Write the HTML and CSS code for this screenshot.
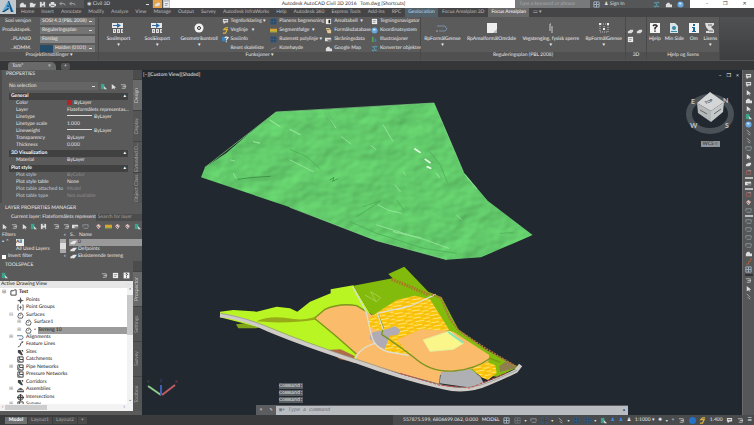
FILE: index.html
```html
<!DOCTYPE html>
<html lang="en">
<head>
<meta charset="utf-8">
<title>Autodesk AutoCAD Civil 3D 2016 - Tom.dwg</title>
<link rel="stylesheet" href="styles.css">
</head>
<body>
<svg class="defs" aria-hidden="true">
  <symbol id="sos" viewBox="0 0 12 12"><path fill="#e8e8e8" d="M0 1h11v5H0z"/><path fill="#2d6ea8" d="M1 3h4V1l4 2.500-4 2.500V4H1z"/><path fill="#ddd" d="M1 7h3v4H1zM5 7h3v4H5zM9 7h2v4H9z"/><path stroke="#444" d="M2 9h1M6 9h1M10 9h1"/></symbol>
  <symbol id="ring" viewBox="0 0 12 12"><circle cx="6" cy="6" r="4.500" fill="#f2f2f2"/><circle cx="6" cy="6" r="1.500" fill="#eee" stroke="#333"/></symbol>
  <symbol id="sheet" viewBox="0 0 8 8"><path fill="#eee" d="M1 1h6v6H1z"/><path stroke="#8a9299" d="M2 3h4M2 5h3"/></symbol>
  <symbol id="flag" viewBox="0 0 8 8"><path fill="#ddd" d="M1 1h6v4H4L2 7V5H1z"/><path stroke="#555" d="M2 3h4"/></symbol>
  <symbol id="curve" viewBox="0 0 8 8"><path fill="none" stroke="#d9b23c" stroke-width="1.300" d="M7 1H4L2 3h4L4 7H1"/></symbol>
  <symbol id="quest" viewBox="0 0 8 8"><path fill="#3a83bd" d="M0 1h4v5H0z"/><path fill="none" stroke="#e7eef4" stroke-width="1.300" d="M3 2l2-1 2 1-2 2v1M5 6v1"/></symbol>
  <symbol id="bluebox" viewBox="0 0 8 8"><path fill="#294763" stroke="#36597a" d="M1 1h6v6H1z"/><path stroke="#44698a" stroke-width=".5" d="M1 4h6M4 1v6"/></symbol>
  <symbol id="gold" viewBox="0 0 8 8"><path fill="#d9a531" d="M0 2h8v4H0z"/><path fill="#7fb04b" d="M0 5h8v1H0z"/></symbol>
  <symbol id="contrast" viewBox="0 0 8 8"><path fill="#eee" d="M1 1h6v6H1z"/><path fill="#222" d="M4 2h2v4H4z"/></symbol>
  <symbol id="hand" viewBox="0 0 8 8"><path fill="#e5c98e" d="M1 1h4l2 3v3H3z"/><path stroke="#666" d="M2 3h3"/></symbol>
  <symbol id="slope" viewBox="0 0 8 8"><path fill="#ddd" d="M0 2h7v4H0z"/><path fill="#777" d="M2 4h5v2H4z"/></symbol>
  <symbol id="cloud" viewBox="0 0 8 8"><path fill="#ddd" d="M1 6V4l2-2h2l1 2h2v3H1z"/></symbol>
  <symbol id="globe" viewBox="0 0 8 8"><circle cx="4" cy="4" r="3.500" fill="#6aa7dc"/><path fill="#d9ecfa" d="M2 2h3v2H3z"/></symbol>
  <symbol id="chart" viewBox="0 0 8 8"><path fill="#58a04c" d="M1 1h2v6H1z"/><path fill="#3f7cb6" d="M4 3h2v4H4z"/></symbol>
  <symbol id="swap" viewBox="0 0 8 8"><path fill="none" stroke="#5aa2b7" d="M1 2h6L5 1M7 6H1l2 1M3 2l2 4"/></symbol>
  <symbol id="dash" viewBox="0 0 8 8"><path stroke="#a08989" fill="none" d="M1 5l3-1 3-1"/></symbol>
  <symbol id="hook" viewBox="0 0 12 12"><path fill="none" stroke="#7891a8" d="M1 4h8l2 3-2 2H3"/><path fill="none" stroke="#aaa" d="M0 9h2"/></symbol>
  <symbol id="area" viewBox="0 0 12 12"><path fill="#eee" d="M1 1h10v10H1z"/><path fill="#bbb" d="M7 11l4-4v4z"/></symbol>
  <symbol id="gate" viewBox="0 0 12 12"><path fill="none" stroke="#ccc" d="M5 2v7M7 4v7M5 2l1 0"/></symbol>
  <symbol id="nodes" viewBox="0 0 12 12"><path stroke="#bbb" stroke-dasharray="1 1" fill="none" d="M1 2h10M2 2v8h8V2M6 4v4"/><path fill="#eee" d="M1 1h2v2H1zM9 1h2v2H9zM5 6h2v2H5z"/></symbol>
  <symbol id="help" viewBox="0 0 12 12"><path fill="#f4f4f4" d="M1 1h10v10H1z"/><path fill="none" stroke="#222" stroke-width="1.500" d="M4 4l1-1h2l1 1-2 2v1.500M6 8.500v1.300"/></symbol>
  <symbol id="page" viewBox="0 0 12 12"><path fill="#d7e4ea" d="M2 1h5l3 3v7H2z"/><circle cx="6" cy="6" r="2" fill="#3c8ba6"/><path fill="#3c8ba6" d="M3 9h6v1H3z"/></symbol>
  <symbol id="info" viewBox="0 0 12 12"><path fill="#f4f4f4" d="M1 1h10v10H1z"/><path fill="#176a9e" d="M5 2h2v2H5zM4 5h3v4h1v1H4V9h1V6H4z"/></symbol>
  <symbol id="scroll" viewBox="0 0 12 12"><path fill="#ddd" d="M1 1h9v2L7 5l3 3v3H2V9h3L2 5z"/><path stroke="#666" d="M4 3h4M5 9h4"/></symbol>
  <symbol id="cube" viewBox="0 0 8 8"><path fill="#ddd" d="M1 4l3-2h3v2L5 6H1z"/></symbol>
  <symbol id="save" viewBox="0 0 8 8"><path fill="#ddd" d="M1 1h6v6H1z"/><path fill="#666" d="M3 1h2v2H3zM3 5h3v2H3z"/></symbol>
  <symbol id="print" viewBox="0 0 8 8"><path fill="#ddd" d="M2 1h4v2h2v3H6v1H2V6H0V3h2z"/><path stroke="#666" d="M2 5h4"/></symbol>
  <symbol id="undo" viewBox="0 0 8 8"><path fill="none" stroke="#aaa" d="M3 1L1 3l2 2M1 3h5l1 2"/></symbol>
  <symbol id="folder" viewBox="0 0 8 8"><path fill="#ddd" d="M1 2h3l1 1h3L6 7H1z"/></symbol>
  <symbol id="arrow" viewBox="0 0 8 8"><path fill="#ddd" d="M2 1l5 4-2 .500L6 8 4 6 2 7z"/></symbol>
  <symbol id="layer" viewBox="0 0 8 8"><path fill="#e5e5e5" d="M1 4l3-2h4L5 6H0z"/></symbol>
  <symbol id="stack" viewBox="0 0 8 8"><path fill="none" stroke="#bbb" d="M1 2h5v4H2M3 4h4"/></symbol>
  <symbol id="redstack" viewBox="0 0 8 8"><path fill="#ccc" d="M1 3l3-2 3 2-3 4z"/><path fill="none" stroke="#b0504a" d="M1 2l4 4M5 2l2 2"/></symbol>
  <symbol id="redbox" viewBox="0 0 8 8"><path fill="none" stroke="#a05c5c" d="M1.500 2v4h5V2z"/><path stroke="#999" d="M3 2h4"/></symbol>
  <symbol id="pencil" viewBox="0 0 8 8"><path fill="none" stroke="#aaa" d="M2 1l4 4M3 5l3 2"/></symbol>
  <symbol id="teal" viewBox="0 0 8 8"><path fill="#39a38b" d="M1 1h4v6H1z"/><path fill="#ddd" d="M4 3l4 4H5z"/></symbol>
  <symbol id="earth" viewBox="0 0 8 8"><path fill="none" stroke="#a7643e" d="M1 7h3V4h2V1h2"/></symbol>
  <symbol id="grid" viewBox="0 0 8 8"><path fill="none" stroke="#a6b6c6" d="M1 1h6v6H1zM4 1v6M1 4h6"/></symbol>
  <symbol id="wire" viewBox="0 0 8 8"><path fill="none" stroke="#8f989c" d="M1 5V2h6v3M2 6h5"/></symbol>
  <symbol id="tdoc" viewBox="0 0 8 8"><path fill="none" stroke="#333" d="M1 2h3l1-1h2v6H1z"/></symbol>
  <symbol id="tpoint" viewBox="0 0 8 8"><path fill="#555" d="M4 0l1 3 3 1-3 1-1 3-1-3-3-1 3-1z"/></symbol>
  <symbol id="tgroup" viewBox="0 0 8 8"><path fill="none" stroke="#666" d="M2 1H1v6h1M6 1h1v6H6M4 2v4M2.500 4h3"/></symbol>
  <symbol id="tsurf" viewBox="0 0 8 8"><path fill="none" stroke="#555" d="M1 5l1-3 3-1 2 3-1 3H2zM3 4l2-1"/></symbol>
  <symbol id="talign" viewBox="0 0 8 8"><path fill="none" stroke="#4a718f" d="M0 2h6l1 2-1 2H2"/></symbol>
  <symbol id="tfeat" viewBox="0 0 8 8"><path fill="none" stroke="#444" d="M1 7l3-2V3l3-2M5 1h2"/></symbol>
  <symbol id="tpipe" viewBox="0 0 8 8"><path fill="none" stroke="#333" d="M1 1h6v6H1zM3 1v3h4M1 4l3 3"/></symbol>
  <symbol id="tcorr" viewBox="0 0 8 8"><path fill="#444" d="M1 1h3l3 6H5L1 4zM5 1h2v3z"/></symbol>
  <symbol id="tasm" viewBox="0 0 8 8"><path fill="#555" d="M0 5l2-2 2-1 2 1 2 2v2H0z"/><path stroke="#ddd" d="M1 5h6"/></symbol>
  <symbol id="tint" viewBox="0 0 8 8"><circle cx="4" cy="4" r="3" fill="none" stroke="#444"/><path stroke="#444" stroke-width="1.500" d="M4 0v8M0 4h8"/></symbol>
</svg>

<div class="app">
  <header class="titlebar">
    <div class="quick">
      <button class="ib" aria-label="New"><svg><use href="#cloud"/></svg></button>
      <button class="ib" aria-label="Open"><svg><use href="#folder"/></svg></button>
      <button class="ib" aria-label="Save"><svg><use href="#save"/></svg></button>
      <button class="ib" aria-label="Plot"><svg><use href="#print"/></svg></button>
      <button class="ib" aria-label="Undo"><svg><use href="#undo"/></svg></button>
      <button class="ib" aria-label="Redo"><svg><use href="#undo"/></svg></button>
      <select class="workspace" aria-label="Workspace"><option>◉ Civil 3D</option></select>
      <button class="ib hot" aria-label="Share"><svg><use href="#cube"/></svg></button>
      <button class="ib pale" aria-label="More"><svg><use href="#sheet"/></svg></button>
    </div>
    <h1>Autodesk AutoCAD Civil 3D 2016 &nbsp; Tom.dwg [Shortcuts]</h1>
    <input class="search" aria-label="Search" placeholder="Type a keyword or phrase">
    <div class="account">
      <button class="ib" aria-label="Find"><svg><use href="#grid"/></svg></button>
      <button>♟ Sign In</button><span class="grow"></span>
      <button class="ib" aria-label="Exchange"><svg><use href="#swap"/></svg></button>
      <button class="ib" aria-label="Connect"><svg><use href="#cloud"/></svg></button>
      <button class="ib" aria-label="Help"><svg><use href="#globe"/></svg></button>
    </div>
    <div class="winbtns"><button aria-label="Minimize">–</button><button aria-label="Restore">❐</button><button aria-label="Close">✕</button></div>
    <button class="appbtn" aria-label="Application menu"><svg viewBox="0 0 16 14"><path fill="#58a8d8" d="M8 1L2 12h3l1-3h4l1 3h3L9 1z"/><path fill="#164f7e" d="M8 4l1 3H7zM8 1l3 11h2L9 1z"/><path fill="#123f66" d="M2 12l6-4 1 1-5 3z"/></svg></button>
  </header>

  <nav class="menu">
    <a href="#">Home</a><a href="#">Insert</a><a href="#">Annotate</a><a href="#">Modify</a><a href="#">Analyze</a><a href="#">View</a><a href="#">Manage</a><a href="#">Output</a><a href="#">Survey</a><a href="#">Autodesk InfraWorks</a><a href="#">Help</a><a href="#">Autodesk 360</a><a href="#">Express Tools</a><a href="#">Add-ins</a><a href="#">RPC</a><a href="#" class="geo">Geolocation</a><a href="#">Focus Arealplan 3D</a><a href="#" class="on">Focus Arealplan</a><a href="#">▭ ▾</a>
  </nav>

  <div class="ribbon">
    <section class="panel p1">
      <div class="body form">
        <label for="s1">Sosi versjon</label><select id="s1"><option>SOSI 4.3 (PBL 2008)</option></select>
        <label for="s2">Produktspek.</label><select id="s2"><option>Reguleringsplan</option></select>
        <label for="s3">..PLANID</label><input id="s3" value="Forslag">
        <label for="s4">..KOMM.</label><select id="s4" class="komm"><option>Halden (0101)</option></select>
      </div>
      <h2>Prosjektinnstillinger ▾</h2>
    </section>
    <section class="panel p2">
      <div class="body">
        <button class="big"><svg><use href="#sos"/></svg>SosiImport<i>▾</i></button>
        <button class="big"><svg><use href="#sos"/></svg>SosiEksport<i>▾</i></button>
        <button class="big"><svg><use href="#ring"/></svg>Geometrikontroll<i>▾</i></button>
        <div class="cmds">
          <button><svg><use href="#flag"/></svg>Tegnforklaring ▾</button>
          <button><svg><use href="#curve"/></svg>Veglinje &nbsp; ▾</button>
          <button><svg><use href="#quest"/></svg>Sosiinfo</button>
          <button><svg></svg>Reset skaleliste</button>
        </div>
        <div class="cmds c2">
          <button><svg><use href="#bluebox"/></svg>Planens begrensning</button>
          <button><svg><use href="#gold"/></svg>Segmentfølge &nbsp;▾</button>
          <button><svg><use href="#bluebox"/></svg>Rutenett polylinje ▾</button>
          <button><svg><use href="#dash"/></svg>Kotehøyde</button>
        </div>
        <div class="cmds c3">
          <button><svg><use href="#contrast"/></svg>Arealtabell &nbsp;▾</button>
          <button><svg><use href="#hand"/></svg>Formålsdatabase</button>
          <button><svg><use href="#slope"/></svg>Skråningsdata</button>
          <button><svg><use href="#cloud"/></svg>Google Map</button>
        </div>
        <div class="cmds c4">
          <button><svg><use href="#sheet"/></svg>Tegningsnavigator</button>
          <button><svg><use href="#globe"/></svg>Koordinatsystem</button>
          <button><svg><use href="#chart"/></svg>Illustrasjoner</button>
          <button><svg><use href="#swap"/></svg>Konverter objekter</button>
        </div>
      </div>
      <h2>Funksjoner ▾</h2>
    </section>
    <section class="panel p3">
      <div class="body">
        <button class="big"><svg><use href="#hook"/></svg>RpFormålGrense<i>▾</i></button>
        <button class="big"><svg><use href="#area"/></svg>RpArealformålOmråde</button>
        <button class="big"><svg><use href="#gate"/></svg>Vegstenging, fysisk sperre<i>▾</i></button>
        <button class="big"><svg><use href="#nodes"/></svg>RpFormålGrense<i>▾</i></button>
      </div>
      <h2>Reguleringsplan (PBL 2008)</h2>
    </section>
    <section class="panel p4">
      <div class="body mini">
        <button class="ib" aria-label="Solid"><svg><use href="#cube"/></svg></button><button class="ib" aria-label="Box"><svg><use href="#cube"/></svg></button><button class="ib" aria-label="Cylinder"><svg><use href="#sheet"/></svg></button>
      </div>
      <h2>3D</h2>
    </section>
    <section class="panel p5">
      <div class="body">
        <button class="big"><svg><use href="#help"/></svg>Hjelp</button>
        <button class="big"><svg><use href="#page"/></svg>Min Side</button>
        <button class="big"><svg><use href="#info"/></svg>Om</button>
        <button class="big"><svg><use href="#scroll"/></svg>Lisens<i>▾</i></button>
      </div>
      <h2>Hjelp og lisens</h2>
    </section>
  </div>

  <div class="files"><button class="file">Tom*<span>×</span></button><button class="plus" aria-label="New drawing">+</button></div>

  <main class="work">
    <aside class="side">
      <section class="dock">
        <div class="content props">
          <h3>PROPERTIES</h3>
          <div class="pick">
            <select aria-label="Selection"><option>No selection</option></select>
            <button class="ib" aria-label="Toggle pick"><svg><use href="#teal"/></svg></button>
            <button class="ib" aria-label="Select objects"><svg><use href="#arrow"/></svg></button>
            <button class="ib" aria-label="Quick select"><svg><use href="#stack"/></svg></button>
          </div>
          <table>
            <colgroup><col class="name"><col></colgroup>
            <tbody>
            <tr class="head"><th colspan="2">General<span>▴</span></th></tr>
            <tr><td>Color</td><td><b class="red"></b>ByLayer</td></tr>
            <tr><td>Layer</td><td>Flateformålets  representas...</td></tr>
            <tr><td>Linetype</td><td><b class="line"></b>ByLayer</td></tr>
            <tr><td>Linetype scale</td><td>1.000</td></tr>
            <tr><td>Lineweight</td><td><b class="line"></b>ByLayer</td></tr>
            <tr><td>Transparency</td><td>ByLayer</td></tr>
            <tr><td>Thickness</td><td>0.000</td></tr>
            </tbody><tbody>
            <tr class="head next"><th colspan="2">3D Visualization<span>▴</span></th></tr>
            <tr><td>Material</td><td>ByLayer</td></tr>
            </tbody><tbody>
            <tr class="head next"><th colspan="2">Plot style<span>▴</span></th></tr>
            <tr class="off"><td>Plot style</td><td>ByColor</td></tr>
            <tr><td>Plot style table</td><td>None</td></tr>
            <tr class="off"><td>Plot table attached to</td><td>Model</td></tr>
            <tr class="off"><td>Plot table type</td><td>Not available</td></tr>
            </tbody>
          </table>
        </div>
        <div class="tabs"><button class="on">Design</button><button>Display</button><button>Extended D...</button><button>Object Class</button></div>
      </section>

      <section class="layers">
        <h3>LAYER PROPERTIES MANAGER</h3>
        <div class="current"><span>Current layer: Flateformålets  represent</span><input aria-label="Search for layer" placeholder="Search for layer"></div>
        <div class="ltools">
          <svg><use href="#arrow"/></svg><svg><use href="#stack"/></svg><svg><use href="#arrow"/></svg><svg><use href="#teal"/></svg><svg><use href="#save"/></svg><i></i><svg><use href="#stack"/></svg><svg><use href="#stack"/></svg><svg><use href="#slope"/></svg><svg><use href="#wire"/></svg><i></i><svg><use href="#redstack"/></svg><svg><use href="#gold"/></svg><svg><use href="#redstack"/></svg><svg><use href="#redstack"/></svg><svg><use href="#teal"/></svg>
        </div>
        <div class="lbody">
          <div class="filters">
            <p>Filters<span>«</span></p>
            <div class="ftree"><span>▪ ⌃</span><b>All</b><em>All Used Layers</em><u></u></div>
            <label><input type="checkbox">Invert filter<span>«</span></label>
          </div>
          <ul class="names">
            <li>S.. &nbsp; Name</li>
            <li class="sel"><svg><use href="#layer"/></svg>0</li>
            <li><svg><use href="#layer"/></svg>Defpoints</li>
            <li><svg><use href="#layer"/></svg>Eksisterende terreng</li>
          </ul>
        </div>
      </section>

      <section class="dock space">
        <div class="content">
          <h3>TOOLSPACE</h3>
          <div class="stools"><button class="ib" aria-label="Item view"><svg><use href="#teal"/></svg></button><span class="grow"></span><button class="ib" aria-label="Panorama"><svg><use href="#stack"/></svg></button><button class="ib" aria-label="Preview"><svg><use href="#sheet"/></svg></button><button class="ib" aria-label="Help"><svg><use href="#help"/></svg></button></div>
          <select class="view" aria-label="View"><option>Active Drawing View</option></select>
          <div class="treebox">
            <ul class="tree">
              <li class="l0 strong"><i>⊟</i><svg><use href="#tdoc"/></svg>Test</li>
              <li><i></i><svg><use href="#tpoint"/></svg>Points</li>
              <li><i></i><svg><use href="#tgroup"/></svg>Point Groups</li>
              <li><i>⊟</i><svg><use href="#tsurf"/></svg>Surfaces</li>
              <li class="l2"><i>⊞</i><svg><use href="#tsurf"/></svg>Surface1</li>
              <li class="l2 chosen"><i>⊞</i><svg><use href="#tsurf"/></svg><small>▫</small><mark>Terreng 10</mark></li>
              <li><i>⊞</i><svg><use href="#talign"/></svg>Alignments</li>
              <li><i></i><svg><use href="#tfeat"/></svg>Feature Lines</li>
              <li><i></i><svg><use href="#tcorr"/></svg>Sites</li>
              <li><i></i><svg><use href="#tpipe"/></svg>Catchments</li>
              <li><i>⊞</i><svg><use href="#tpipe"/></svg>Pipe Networks</li>
              <li><i></i><svg><use href="#tpipe"/></svg>Pressure Networks</li>
              <li><i></i><svg><use href="#tcorr"/></svg>Corridors</li>
              <li><i>⊞</i><svg><use href="#tasm"/></svg>Assemblies</li>
              <li><i></i><svg><use href="#tint"/></svg>Intersections</li>
              <li class="cut"><i>⊞</i><svg><use href="#tpipe"/></svg>Survey</li>
            </ul>
            <div class="vbar"><span>⌃</span><b></b><span>⌄</span></div>
          </div>
          <div class="hbar"><span>‹</span><b></b><span>›</span></div>
        </div>
        <div class="tabs"><button class="on">Prospector</button><button>Settings</button><button>Survey</button><button>Toolbox</button></div>
      </section>
    </aside>

    <section class="canvas">
      <svg class="model" viewBox="142 70 600 345" role="img" aria-label="Terrain surface and zoning plan">
        <defs>
          <filter id="relief" x="0" y="0" width="100%" height="100%" color-interpolation-filters="sRGB">
            <feTurbulence type="fractalNoise" baseFrequency=".012 .016" numOctaves="3" seed="8" result="n"/>
            <feDiffuseLighting in="n" surfaceScale="4" diffuseConstant="1.150" lighting-color="#63cb6b"><feDistantLight azimuth="225" elevation="60"/></feDiffuseLighting>
            <feComposite in2="SourceGraphic" operator="in"/>
          </filter>
          <pattern id="hatch" width="52" height="22" patternUnits="userSpaceOnUse" patternTransform="rotate(-9)"><path fill="#fbc60a" d="M0 0h52v22H0z"/><path stroke="#fff3b5" stroke-width="2" d="M2 4h24M32 9h18M8 15h26M40 20h12"/><path stroke="#f0a818" stroke-width="2" d="M28 3h16M3 10h20M38 15h12"/></pattern>
        </defs>
        <g transform="translate(190 90) scale(.3333)">
          <path filter="url(#relief)" fill="#60c868" d="M33 262L45 232L110 188L175 132L258 66L420 58L732 39L780 150L820 245L893 332L1028 435L873 502L770 509L560 452L300 352z"/>
          <g fill="none" stroke-linecap="round">
            <path stroke="#a8efaa" stroke-width="2" d="M400 64l38 50M455 140l28 22M580 105l28 48M560 405l60 18l90 28l66 24M545 168l12 10M825 254l35 42M565 345l28 15l42 10M122 210l12 3M300 210l70 35M800 375l14 14M130 250l8 15M615 285l16 20M640 245l6 10"/>
            <path stroke="#4aa653" stroke-width="2" d="M400 63l30 45M720 185l32 42l20 50M520 350l52-18M480 395l80 35l140 45l100 15M930 430l40-2M500 380l70-45M300 178l50 22l40 36M620 330l22 30"/>
            <path stroke="#2f8038" stroke-width="2" d="M420 270l12-8l-4 12l16-8M145 268l30-4l20-2l46-3"/>
            <path stroke="#eaffea" stroke-width="5" d="M675 177l15 10M706 208l14 10M712 230l10 5"/>
            <path stroke="#8ce391" stroke-width="4" d="M610 425l85 20M740 250l8 12M240 90l30 20M190 155l18 4M300 118l30 16"/>
            <path stroke="#84dd89" stroke-width="2" d="M45 232L258 66L732 39L820 245M300 352l260 100l210 57"/>
          </g>
        </g>
        <g transform="translate(210 260) scale(.3333)">
          <path fill="#80a519" d="M78 193l70-8l30 10l-40 10H85z"/>
          <path fill="#b9f522" d="M30 155L70 150L140 155L200 140L240 145L262 155L300 125L362 100V88L430 76L480 160L440 305L160 205L30 172z"/>
          <path fill="#83bb0c" d="M430 77L548 55L535 42L583 20L655 95L695 112L745 208L830 270L925 322L860 350L730 330L480 160z"/>
          <path fill="#97ab18" d="M140 184q40-20 110-7q50 6 90-18l-25 20q-60 10-130 8z"/>
          <path fill="#fabb6a" d="M315 173L350 145Q390 130 440 137L475 160L500 170L560 195L730 215L838 285L835 305Q800 330 740 335L690 345L688 372L440 305L438 280z"/>
          <path fill="url(#hatch)" d="M500 158L560 120L615 107L660 118L718 210L645 222L595 265L605 280L560 282L525 270L515 215L475 200L475 178z"/>
          <path fill="#fabb6a" d="M560 240l72-32l84 4l-76 22l-6 28l-40 14z"/>
          <path fill="#b0abb4" d="M484 218l50-12l20-8l18 12l-8 14l-24 3l-16 40l-24-12l-22-20z"/>
          <path fill="#faf68a" stroke="#e3f1a0" stroke-width="3" d="M640 240l60-20l20-6l40 36l-30 18l-70 6z"/>
          <path fill="none" stroke="#83e6b8" stroke-width="6" d="M715 216l44 32"/>
          <path fill="#aeb0b4" d="M693 336l90-8l28 22l12 22l-50 10l-84-12z"/>
          <path fill="url(#hatch)" d="M787 326l45-20l24 10l4 24l-26 20l-20-8z"/>
          <path fill="#8f7f4d" d="M868 318l22-16l30 22l-50 12z"/>
          <path fill="#b16c47" d="M350 270l42-2l42 20l-4 18l-40-8z"/>
          <g fill="none" stroke-linejoin="round">
            <path stroke="#7c951c" stroke-width="4" d="M315 173L345 148Q390 128 440 137L468 154M502 158l18 45l-5 20q60 40 98 70q50 45 120 40q60-4 108-38l30 12M315 176l60 50l64 56"/>
            <path stroke="#e0ded0" stroke-width="4" d="M428 80l40 74l16 70q8 40 52 52l60 10M434 302q10-36 60-52M520 210l-18-50l100-22l75-35"/>
            <path stroke="#cfccc8" stroke-width="12" d="M30 166q70 8 145 43q100 42 260 94q140 52 265 79q70 18 140-14q40-16 78-35l14-18"/>
            <path stroke="#8a8a86" stroke-width="2" d="M32 160q80 14 150 44q100 42 260 95q130 46 255 76q80 20 150-12l74-32"/>
            <path stroke="#a77a24" stroke-width="10" stroke-dasharray="5 3" d="M545 58l45 18l65 28"/>
            <path stroke="#ad7440" stroke-width="6" stroke-dasharray="6 3" d="M655 100l38 14l25 60l28 38l85 56l88 52"/>
            <path stroke="#c55048" stroke-width="3" stroke-dasharray="9 4" d="M570 340l120 36l90 8l50-20l60-25"/>
            <path stroke="#b5d669" stroke-width="2" d="M465 105l35 20l12-12l-30-18l16 30"/>
          </g>
        </g>
        <g fill="none" stroke-width="2"><path stroke="#8dcd8b" d="M148 386l13 9"/><path stroke="#405fb4" d="M161 395v-10"/><path stroke="#bd5c67" d="M162 395l13-10"/></g>
        <g class="axes"><text x="147" y="383" fill="#397145">Y</text><text x="160" y="382" fill="#41539a">Z</text><text x="175" y="383" fill="#a23f49">X</text></g>
      </svg>
      <a class="viewlabel" href="#">[−][Custom View][Shaded]</a>
      <div class="corner">
        <div class="winctl"><button aria-label="Minimize">–</button><button aria-label="Restore">❐</button><button aria-label="Close">×</button></div>
        <svg class="viewcube" viewBox="0 0 50 45"><ellipse cx="25" cy="23" rx="21" ry="17" fill="none" stroke="#4a5157" stroke-width="6"/><path fill="#d3d5d6" d="M25 1l14 10l-13 9L12 12z"/><path fill="#b5b8ba" d="M12 12l14 8v11L13 22z"/><path fill="#c5c8c9" d="M39 11l-13 9v11l12-10z"/><text x="20" y="12" transform="rotate(-25 24 11)" fill="#444">TOP</text><path stroke="#666" d="M15 19l7 4M29 23l7-5"/><g class="dir" fill="#bfc4c7"><text x="6" y="13">E</text><text x="38" y="12">N</text><text x="5" y="37">W</text><text x="40" y="37">S</text></g></svg>
        <button class="wcs">WCS ▿</button>
      </div>
      <div class="console">
        <output>Command:</output><output>Command:</output><output>Command:</output>
        <div class="cmdline"><span>×</span><span>✎</span><input aria-label="Command" placeholder="▣▾ Type a command"><button aria-label="History">▴</button></div>
      </div>
    </section>

    <div class="rail">
      <svg><use href="#flag"/></svg><svg><use href="#flag"/></svg><svg><use href="#arrow"/></svg><svg><use href="#cloud"/></svg><svg><use href="#arrow"/></svg><svg><use href="#teal"/></svg><svg><use href="#globe"/></svg><svg><use href="#pencil"/></svg><svg><use href="#pencil"/></svg><svg><use href="#wire"/></svg><svg><use href="#arrow"/></svg><svg><use href="#cube"/></svg><svg><use href="#redbox"/></svg><hr><svg><use href="#slope"/></svg><hr><svg><use href="#redbox"/></svg><svg><use href="#redstack"/></svg><svg><use href="#wire"/></svg><hr><svg><use href="#wire"/></svg><svg><use href="#wire"/></svg><svg><use href="#wire"/></svg><svg><use href="#wire"/></svg><svg><use href="#cloud"/></svg><svg><use href="#earth"/></svg><svg><use href="#grid"/></svg><hr class="dark"><svg><use href="#stack"/></svg><svg><use href="#arrow"/></svg><svg><use href="#pencil"/></svg>
    </div>
  </main>

  <footer class="status">
    <button class="lay on">Model</button><button class="lay">Layout1</button><button class="lay">Layout2</button><button class="lay add">+</button>
    <span class="grow"></span>
    <div class="tray">
      <span class="coords">557875.599, 6806699.062, 0.000</span><button>MODEL</button>
      <svg><use href="#grid"/></svg><svg class="dim"><use href="#grid"/></svg><i>▾</i><svg><use href="#wire"/></svg><svg class="blue"><use href="#tint"/></svg><i>▾</i><svg><use href="#pencil"/></svg><i>▾</i><svg><use href="#bluebox"/></svg><svg><use href="#bluebox"/></svg><i>▾</i><svg><use href="#teal"/></svg><span class="lit">♟</span><span class="lit">♟</span><span>♟</span><button>1:1000 ▾</button><span>✹</span><i>▾</i><span>+</span><svg><use href="#stack"/></svg><span class="dot"></span><svg><use href="#curve"/></svg><button>1.400</button><svg><use href="#flag"/></svg><svg><use href="#stack"/></svg><span>☰</span>
    </div>
  </footer>
</div>
</body>
</html>
```
FILE: styles.css
```css
* { box-sizing: border-box; }
html, body { height: 100%; }
body { margin: 0; font: 5px/7px Lato, "Noto Sans", sans-serif; color: #e8e8e8; background: #3b3c3e; overflow: hidden; text-rendering: geometricPrecision; }
button, input, select { font: inherit; color: inherit; text-rendering: inherit; margin: 0; padding: 0; border: 0; background: none; min-width: 0; border-radius: 0; }
button { white-space: nowrap; }
select { appearance: none; padding: 0 3px; background: #727272 linear-gradient(#ddd, #ddd) right 3px center / 3px 1px no-repeat; }
a { color: inherit; text-decoration: none; }
h1, h2, h3, p, ul { margin: 0; padding: 0; font-size: 5px; font-weight: 400; list-style: none; }
svg { display: block; flex: none; width: 7px; height: 7px; overflow: hidden; }
i { font-style: normal; }
.defs { position: absolute; width: 0; height: 0; }
.grow { flex: 1; }
.ib { display: grid; place-items: center; width: 9px; height: 8px; flex: none; }

.app { height: 100%; display: flex; flex-direction: column; }

.titlebar { position: relative; display: flex; height: 8px; flex: none; background: #fff; color: #333; }
.titlebar h1 { flex: 1; text-align: center; line-height: 8px; white-space: nowrap; padding-left: 2px; }
.quick { display: flex; align-items: center; gap: 1px; width: 170px; padding-left: 18px; background: #555658; color: #ddd; }
.workspace { flex: 1; height: 8px; margin-left: 6px; background-color: #454648; }
.hot { background: #e6a247; }
.pale { background: #bfc3c7; width: 7px; }
.search { width: 75px; background: #77797b; padding: 0 4px; color: #bbb; }
.search::placeholder { color: #a9a9a9; }
.account { display: flex; align-items: center; gap: 3px; width: 100px; background: #555658; color: #ddd; padding: 0 5px 0 2px; }
.winbtns { display: flex; width: 64px; justify-content: space-around; padding-left: 8px; }
.appbtn { position: absolute; left: 0; top: 0; width: 16px; height: 14px; background: #c0c8ce; z-index: 2; }
.appbtn svg { width: 16px; height: 14px; }

.menu { display: flex; align-items: center; height: 9px; flex: none; gap: 1px; padding-left: 18px; background: #454547; color: #bcbcbc; white-space: nowrap; }
.menu a { padding: 0 3px; line-height: 9px; }
.menu .geo { background: #53616a; color: #b9dbe8; }
.menu .on { background: #69696a; color: #fff; }

.ribbon { display: flex; height: 43px; flex: none; background: linear-gradient(#505153, #3d3e40); }
.panel { display: flex; flex-direction: column; background: #5b5b5c; border-right: 1px solid #494949; }
.panel h2 { height: 8px; line-height: 7px; text-align: center; background: #505051; }
.body { display: flex; flex: 1; padding-top: 1px; }
.p1 { width: 99px; }
.p2 { width: 322px; }
.p3 { width: 205px; }
.p4 { width: 21px; }
.p5 { width: 73px; }
.form { display: grid; grid-template-columns: 31px 1fr; grid-auto-rows: 7px; gap: 2px 9px; padding: 1px 3px 0 0; align-content: start; }
.form label { text-align: right; white-space: nowrap; }
.form select, .form input { height: 7px; width: 100%; line-height: 7px; background-color: #747475; }
.form select { padding: 0 8px 0 2px; }
.form input { padding-left: 2px; background: #858586; }
.form .komm { border-left: 13px solid #244c69; }
.big { display: flex; flex-direction: column; align-items: center; justify-content: flex-start; padding-top: 4px; line-height: 7px; color: #f0f0f0; }
.big svg { width: 12px; height: 12px; margin-bottom: 2px; }
.big i { line-height: 4px; }
.p2 .big { width: 39px; }
.p2 .big:nth-child(3) { width: 45px; }
.p3 .big { flex: 1 1 auto; }
.p5 .big { flex: 1 1 auto; }
.cmds { display: flex; flex-direction: column; gap: 2px; width: 49px; white-space: nowrap; }
.cmds.c2 { width: 55px; }
.cmds.c3 { width: 46px; }
.cmds.c4 { width: 49px; }
.cmds button { display: flex; align-items: center; gap: 2px; height: 7px; line-height: 7px; }
.mini { flex-wrap: wrap; align-content: center; }

.files { display: flex; align-items: flex-end; gap: 5px; height: 10px; flex: none; padding-left: 8px; background: #353638; border-top: 1px solid #555; }
.file { display: flex; justify-content: space-between; width: 48px; height: 8px; line-height: 8px; padding: 0 5px 0 4px; background: #69696a; border-radius: 3px 5px 0 0; }
.plus { width: 9px; height: 7px; background: #555; border-radius: 2px; }

.work { display: flex; flex: 1; min-height: 0; }
.side { display: flex; flex-direction: column; width: 142px; flex: none; background: #5a5a5b; }
h3 { height: 8px; line-height: 8px; padding-left: 5px; }
.dock { display: flex; }
.content { flex: 1; min-width: 0; display: flex; flex-direction: column; }
.tabs { display: flex; flex-direction: column; width: 9px; flex: none; background: #4c4c4d; color: #a5a5a5; }
.tabs button { flex: 1; writing-mode: vertical-rl; transform: rotate(180deg); line-height: 9px; background: #555556; border-bottom: 1px solid #444; }
.tabs .on { background: #69696a; color: #ccc; }
.props { padding: 0 5px 3px 7px; border-left: 2px solid #4b4b4c; }
.props h3 { padding-left: 0; margin-left: -3px; }
.props + .tabs { padding-top: 9px; }
.pick { display: flex; align-items: center; gap: 1px; padding: 4px 0 3px; }
.pick select { flex: 1; height: 8px; background-color: #656566; padding: 0; }
table { border-collapse: collapse; table-layout: fixed; width: 100%; }
.name { width: 58px; }
td, th { height: 7px; line-height: 7px; padding: 0; text-align: left; white-space: nowrap; }
td:first-child { padding-left: 7px; }
.head th { background: #414142; font-weight: 700; color: #fff; padding: 0 2px; }
.head.next th { border-top: 1px solid #5a5a5b; }
.head span { float: right; font-weight: 400; }
.off td { color: #cfcfcf; }
.off td + td { color: #8e8e8e; }
.red { display: inline-block; width: 5px; height: 5px; margin-right: 2px; background: #b52424; vertical-align: -1px; }
.line { display: inline-block; width: 25px; height: 1px; margin-right: 2px; background: #ddd; vertical-align: 2px; }

.layers { padding-top: 1px; }
.current { display: flex; align-items: center; height: 10px; padding-left: 11px; white-space: nowrap; }
.current span { flex: 1; }
.current input { width: 50px; height: 7px; padding-left: 2px; background: #4c4c4d; }
.current input::placeholder { color: #a5a5a5; }
.ltools { display: flex; justify-content: space-between; height: 10px; padding: 1px 1px 0; }
.lbody { display: flex; height: 29px; overflow: hidden; }
.filters { width: 69px; padding: 0 3px 0 2px; }
.filters p, .filters label { display: flex; align-items: center; height: 7px; }
.filters p span, .filters label span { margin-left: auto; }
.filters input { appearance: none; width: 4px; height: 4px; margin-right: 2px; background: #fff; }
.ftree { display: grid; grid-template-columns: 14px 8px 1fr 6px; grid-template-rows: 7px 7px; height: 14px; }
.ftree b { background: #eee; color: #333; height: 7px; }
.ftree em { grid-row: 2; grid-column: 2 / 4; font-style: normal; white-space: nowrap; }
.ftree u { grid-column: 4; grid-row: 1 / 3; background: #ddd; border: solid #aaa; border-width: 4px 0; }
.names { flex: 1; }
.names li { display: flex; align-items: center; gap: 1px; height: 7px; padding-left: 1px; }
.names .sel { background: #9a9a9a; color: #222; }

.space { flex: 1; min-height: 0; padding-bottom: 4px; }
.space .tabs { padding-top: 10px; }
.stools { display: flex; align-items: center; gap: 2px; height: 12px; padding: 0 2px 0 0; flex: none; }
.view { height: 7px; flex: none; background-color: #e6e6e6; color: #111; padding: 0 1px; }
.treebox { display: flex; flex: 1; min-height: 0; background: #fff; color: #111; }
.tree { flex: 1; display: grid; grid-template-rows: repeat(15, minmax(0, 1fr)) 3px; padding-top: 1px; min-width: 0; overflow: hidden; }
.tree li { display: flex; align-items: center; gap: 2px; padding-left: 9px; min-height: 0; }
.tree li.cut { align-items: flex-start; }
.tree li i { width: 6px; color: #999; }
.tree li.l0 { padding-left: 2px; }
.tree li.l2 { padding-left: 17px; }
.tree .strong { font-weight: 700; }
.tree mark { flex: 1; background: #9b9b9b; color: #111; }
.vbar { display: flex; flex-direction: column; width: 6px; color: #444; text-align: center; background: #f2f2f2; }
.vbar b { flex: 0 0 40px; background: #c8c8c8; }
.vbar span:last-child { margin-top: auto; }
.hbar { display: flex; height: 7px; flex: none; background: #f3f3f3; color: #222; padding: 0 2px; }
.hbar b { width: 42px; margin: 1px 2px; background: #cdcdcd; }
.hbar span:last-child { margin-left: auto; margin-right: 6px; }
small { font-size: 5px; }

.canvas { position: relative; flex: 1; min-width: 0; background: #22282f; overflow: hidden; }
.model { width: 100%; height: 100%; }
.axes text { font-size: 4px; }
.viewlabel { position: absolute; left: 1px; top: 2px; color: #eee; }
.corner { position: absolute; right: 3px; top: 3px; width: 58px; display: flex; flex-direction: column; align-items: center; }
.winctl { align-self: flex-end; display: flex; gap: 5px; color: #fff; }
.viewcube { width: 50px; height: 45px; margin-top: 11px; overflow: visible; }
.viewcube text { font-size: 4px; font-weight: 700; }
.viewcube .dir text { font-size: 7px; }
.wcs { margin-top: 5px; width: 19px; height: 6px; line-height: 6px; background: #8e949a; color: #333; }
.console { position: absolute; left: 114px; right: 114px; bottom: 0; display: flex; flex-direction: column; align-items: flex-start; gap: 1px; font-family: "Liberation Mono", monospace; }
.console output { margin-left: 23px; height: 6px; line-height: 6px; font-size: 5px; background: #595e63; }
.cmdline { display: flex; align-items: center; width: 100%; height: 10px; margin-top: 1px; background: #5b5d60; }
.cmdline span { width: 10px; text-align: center; }
.cmdline input { flex: 1; height: 9px; padding-left: 3px; background: #b9bdc1; }
.cmdline input::placeholder { color: #686c70; font-style: italic; }
.cmdline button { height: 9px; width: 8px; background: #b9bdc1; color: #222; }

.rail { width: 12px; flex: none; display: flex; flex-direction: column; align-items: center; gap: 1px; padding-top: 3px; background: #555657; border-left: 1px solid #6a6a6a; }
.rail hr { width: 8px; height: 2px; margin: 0; border: 0; background: #bbb; }
.rail .dark { background: #333; }

.status { display: flex; align-items: center; height: 10px; flex: none; padding-left: 5px; gap: 1px; background: #3a3b3d; }
.lay { width: 24px; height: 7px; line-height: 7px; color: #a5a5a5; background: #4a4a4b; }
.lay.on { width: 22px; background: #707071; color: #fff; font-weight: 700; }
.lay.add { width: 9px; color: #ccc; }
.tray { display: flex; align-items: center; justify-content: space-between; width: 361px; height: 10px; padding: 0 2px 0 10px; background: #4a4b4d; white-space: nowrap; }
.tray svg { width: 7px; height: 7px; }
.tray i { font-size: 4px; }
.blue { background: #2768b0; border-radius: 4px; }
.dim { opacity: .4; }
.lit { color: #3d8be0; }
.dot { width: 7px; height: 7px; border-radius: 4px; background: #2472c8; }
```
